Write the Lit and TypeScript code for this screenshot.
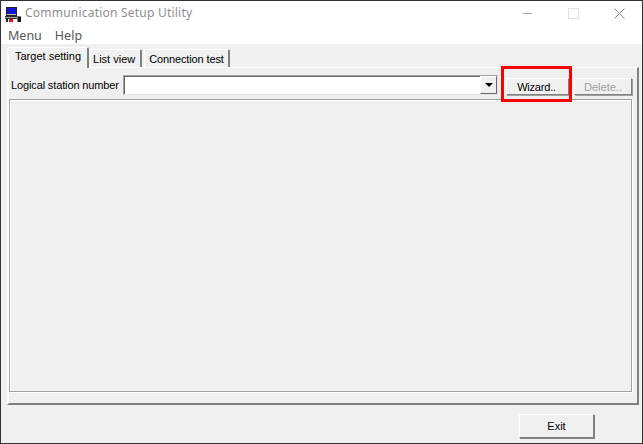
import { LitElement, html, css } from "lit";
import { customElement } from "lit/decorators.js";

@customElement("app-root")
export class AppRoot extends LitElement {
  static styles = css`
    :host { display: block; width: 643px; height: 444px; font-family: "Liberation Sans", Arial, sans-serif; font-size: 11px; color: #000; }
    * { box-sizing: border-box; }
    .win { width: 643px; height: 444px; display: flex; flex-direction: column; border: 1px solid #333; background: #f0f0f0; overflow: hidden; }
    .title { height: 24px; flex: none; background: #fff; display: flex; align-items: center; padding-left: 3px; }
    .title .ico { width: 18px; height: 18px; margin-right: 3px; flex: none; }
    .title .t { font-family: "Noto Sans", sans-serif; font-size: 12px; color: #8e8e8e; letter-spacing: .22px; flex: 1; padding-bottom: 1px; }
    .ctl { width: 46px; height: 24px; display: flex; align-items: center; justify-content: center; }
    .menu { height: 19px; flex: none; background: #fff; display: flex; gap: 13px; padding: 1px 0 0 7px; font-family: "Noto Sans", sans-serif; font-size: 12.5px; color: #555; align-items: center; }
    .body { flex: 1; display: flex; flex-direction: column; padding: 3px 3px 0 6px; min-height: 0; }
    .tabs { display: flex; height: 20px; flex: none; align-items: flex-start; gap: 1px; }
    .tab { height: 18px; margin-top: 2px; padding: 0 5px 0 2px; display: flex; align-items: center; border-top: 1px solid #fff; border-left: 1px solid #fff; border-right: 2px solid #808080; border-top-left-radius: 2px; border-top-right-radius: 2px; white-space: nowrap; }
    .tab.on { height: 21px; margin-top: 0; padding: 0 6px 4px 6px; background: #f0f0f0; position: relative; z-index: 1; border-left-width: 2px; }
    .tab.conn { margin-left: 1px; padding: 0 4px 0 4px; letter-spacing: -.13px; }
    .panel { flex: 1; display: flex; flex-direction: column; border-top: 1px solid #fff; border-left: 2px solid #fff; border-right: 2px solid #808080; border-bottom: 2px solid #808080; padding: 7px 5px 11px 0; min-height: 0; }
    .row { display: flex; align-items: flex-start; height: 20px; flex: none; }
    .lbl { width: 114px; height: 20px; line-height: 20px; padding-left: 2px; flex: none; white-space: nowrap; letter-spacing: -.13px; }
    .combo { width: 375px; height: 20px; flex: none; background: #fff; border: 1px solid; border-color: #a0a0a0 #e3e3e3 #e3e3e3 #a0a0a0; display: flex; justify-content: flex-end; box-shadow: inset 1px 1px 0 #696969; }
    .arrow { width: 17px; height: 18px; background: #f0f0f0; border: 1px solid; border-color: #fff #696969 #696969 #fff; display: flex; align-items: center; justify-content: center; }
    .arrow i { width: 0; height: 0; border-left: 4px solid transparent; border-right: 4px solid transparent; border-top: 4px solid #000; display: block; }
    .btn { height: 17px; background: #f0f0f0; border: 1px solid; border-color: #fff #808080 #808080 #fff; box-shadow: 1px 1px 0 #a0a0a0; display: flex; align-items: center; justify-content: center; white-space: nowrap; }
    .wiz-wrap { position: relative; margin: 3px 0 0 8px; }
    .wiz { width: 63px; letter-spacing: -.2px; padding-right: 2px; }
    .hl { position: absolute; left: -5px; top: -12px; width: 71px; height: 36px; border: 3px solid #f00; pointer-events: none; }
    .del { width: 58px; margin: 3px 0 0 5px; color: #a0a0a0; }
    .group { flex: 1; margin: 4px 0 0 0; border: 1px solid #a0a0a0; box-shadow: inset 1px 1px 0 #fff, 1px 1px 0 #fff; min-height: 0; }
    .foot { height: 38px; flex: none; display: flex; justify-content: flex-end; padding: 9px 45px 0 0; }
    .exit { width: 75px; height: 24px; border-color: #fff #808080 #808080 #fff; box-shadow: 1px 1px 0 #808080; }
  `;

  render() {
    return html`
      <div class="win">
        <div class="title">
          <svg class="ico" viewBox="0 0 18 18">
            <rect x="2" y="3" width="11" height="9" fill="#222"/>
            <rect x="3" y="4" width="9" height="6" fill="#1515d8"/>
            <rect x="3" y="10" width="9" height="1" fill="#c0c0c0"/>
            <rect x="1" y="12" width="13" height="3" fill="#333"/>
            <rect x="1" y="13" width="12" height="1" fill="#9a9a9a"/>
            <rect x="13" y="12" width="4" height="8" fill="#777"/>
            <rect x="14" y="13" width="3" height="5" fill="#111"/>
            <rect x="5" y="15" width="4" height="3" fill="#d81818"/>
            <rect x="2" y="15" width="2" height="3" fill="#222"/>
          </svg>
          <span class="t">Communication Setup Utility</span>
          <span class="ctl"><svg width="11" height="11" viewBox="0 0 11 11"><path d="M0.5 5.5H10.5" stroke="#aaa"/></svg></span>
          <span class="ctl"><svg width="11" height="11" viewBox="0 0 11 11"><rect x=".5" y=".5" width="10" height="10" fill="none" stroke="#e0e0e0"/></svg></span>
          <span class="ctl"><svg width="11" height="11" viewBox="0 0 11 11"><path d="M.5 .5L10.5 10.5M10.5 .5L.5 10.5" stroke="#888"/></svg></span>
        </div>
        <div class="menu"><span>Menu</span><span>Help</span></div>
        <div class="body">
          <div class="tabs">
            <div class="tab on">Target setting</div>
            <div class="tab">List view</div>
            <div class="tab conn">Connection test</div>
          </div>
          <div class="panel">
            <div class="row">
              <div class="lbl">Logical station number</div>
              <div class="combo"><div class="arrow"><i></i></div></div>
              <div class="wiz-wrap">
                <div class="btn wiz">Wizard..</div>
                <div class="hl"></div>
              </div>
              <div class="btn del">Delete..</div>
            </div>
            <div class="group"></div>
          </div>
          <div class="foot"><div class="btn exit">Exit</div></div>
        </div>
      </div>
    `;
  }
}
